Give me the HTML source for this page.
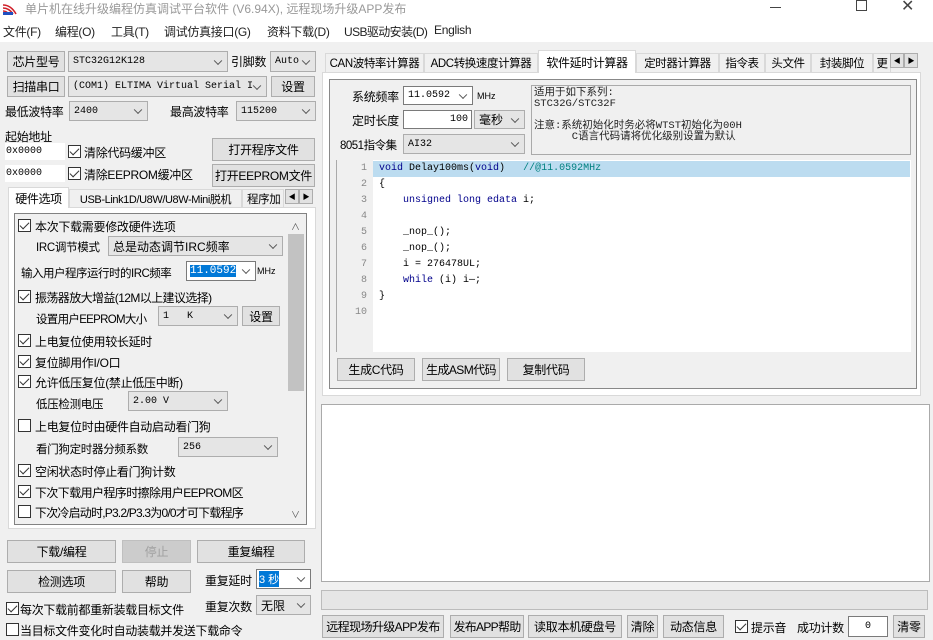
<!DOCTYPE html>
<html><head><meta charset="utf-8">
<style>
*{box-sizing:border-box;margin:0;padding:0}
body{width:933px;height:640px;background:#f0f0f0;position:relative;overflow:hidden;font-family:"Liberation Sans","Noto Sans CJK SC",sans-serif;font-size:12px;color:#000}
.a{position:absolute;white-space:nowrap}
.l{font-size:12px;letter-spacing:-0.3px}
.btn{position:absolute;background:#e1e1e1;border:1px solid #adadad;text-align:center;font-size:12px;display:flex;align-items:center;justify-content:center;white-space:nowrap;overflow:hidden;letter-spacing:-0.3px}
.cb{position:absolute;background:#fff;border:1px solid #7a7a7a;font-family:"Liberation Mono","Noto Sans CJK SC",monospace;font-size:10px;padding-left:3px;display:flex;align-items:center;white-space:nowrap;overflow:hidden}
.cmb{position:absolute;background:#e5e5e5;border:1px solid #adadad;font-family:"Liberation Mono","Noto Sans CJK SC",monospace;font-size:10px;padding-left:4px;display:flex;align-items:center;white-space:nowrap;overflow:hidden}
.cmb::after,.cb.dd::after{content:"";position:absolute;right:6px;top:50%;width:5px;height:5px;border-right:1px solid #555;border-bottom:1px solid #555;transform:translateY(-70%) rotate(45deg);background:inherit}
.chk{position:absolute;width:13px;height:13px;border:1px solid #333;background:#fff}
.chk.on::after{content:"";position:absolute;left:3px;top:0px;width:4px;height:8px;border-right:1.5px solid #333;border-bottom:1.5px solid #333;transform:rotate(45deg)}
.tab{position:absolute;border:1px solid #d9d9d9;border-bottom:none;background:#f0f0f0;text-align:center;font-size:11.5px;display:flex;align-items:center;justify-content:center;white-space:nowrap;overflow:hidden;letter-spacing:-0.4px}
.mono{font-family:"Liberation Mono","Noto Sans CJK SC",monospace}
.code{position:absolute;left:379px;font-family:"Liberation Mono",monospace;font-size:10px;height:16px;line-height:16px;white-space:pre}
.ln{position:absolute;left:340px;width:27px;text-align:right;font-family:"Liberation Mono",monospace;font-size:10px;color:#888;line-height:16px}
.kw{color:#00008b}
.m{position:absolute;top:23px;font-size:12px;color:#222;white-space:nowrap;letter-spacing:-0.3px}
</style></head><body>
<div class="a" style="left:0;top:0;width:933px;height:42px;background:#fff"></div>
<svg class="a" style="left:2px;top:2px" width="16" height="14"><path d="M1 3 Q9 3 14 12 M1 6 Q7 6 11 12 M1 9 Q4 9 7 12" stroke="#d0202a" stroke-width="1.6" fill="none"/><rect x="1" y="10" width="10" height="3" fill="#2050c0"/></svg>
<div class="a" style="left:25px;top:0px;font-size:12px;color:#999">单片机在线升级编程仿真调试平台软件 (V6.94X), 远程现场升级APP发布</div>
<div class="a" style="left:770px;top:7px;width:11px;height:1px;background:#444"></div>
<div class="a" style="left:856px;top:0px;width:11px;height:11px;border:1px solid #444"></div>
<div class="a" style="left:901px;top:-4px;font-size:16px;color:#444">✕</div>
<div class="m" style="left:3px">文件(F)</div>
<div class="m" style="left:55px">编程(O)</div>
<div class="m" style="left:111px">工具(T)</div>
<div class="m" style="left:164px">调试仿真接口(G)</div>
<div class="m" style="left:267px">资料下载(D)</div>
<div class="m" style="left:344px;letter-spacing:-0.6px">USB驱动安装(D)</div>
<div class="m" style="left:434px">English</div>

<div class="btn" style="left:7px;top:51px;width:58px;height:21px">芯片型号</div>
<div class="cmb" style="left:68px;top:51px;width:160px;height:21px">STC32G12K128</div>
<div class="a l" style="left:231px;top:53px">引脚数</div>
<div class="cmb" style="left:270px;top:51px;width:46px;height:21px">Auto</div>
<div class="btn" style="left:7px;top:76px;width:58px;height:21px">扫描串口</div>
<div class="cmb" style="left:68px;top:76px;width:199px;height:21px;padding-right:16px">(COM1) ELTIMA Virtual Serial I</div>
<div class="btn" style="left:271px;top:76px;width:44px;height:21px">设置</div>
<div class="a l" style="left:5px;top:103px">最低波特率</div>
<div class="cmb" style="left:69px;top:101px;width:79px;height:20px">2400</div>
<div class="a l" style="left:170px;top:103px">最高波特率</div>
<div class="cmb" style="left:236px;top:101px;width:80px;height:20px">115200</div>
<div class="a l" style="left:5px;top:128px">起始地址</div>
<div class="a mono" style="left:5px;top:143px;width:60px;height:17px;background:#fff;font-size:10px;padding:3px 1px">0x0000</div>
<div class="chk on" style="left:68px;top:145px"></div>
<div class="a l" style="left:84px;top:144px">清除代码缓冲区</div>
<div class="btn" style="left:212px;top:138px;width:103px;height:23px">打开程序文件</div>
<div class="a mono" style="left:5px;top:165px;width:60px;height:17px;background:#fff;font-size:10px;padding:3px 1px">0x0000</div>
<div class="chk on" style="left:68px;top:167px"></div>
<div class="a l" style="left:84px;top:166px">清除EEPROM缓冲区</div>
<div class="btn" style="left:212px;top:164px;width:103px;height:23px">打开EEPROM文件</div>

<div class="a" style="left:8px;top:207px;width:308px;height:322px;border:1px solid #d9d9d9;background:#fff"></div>
<div class="tab" style="left:8px;top:187px;width:61px;height:21px;background:#fff;font-size:12px">硬件选项</div>
<div class="tab" style="left:69px;top:189px;width:173px;height:18px;font-size:11px">USB-Link1D/U8W/U8W-Mini脱机</div>
<div class="tab" style="left:242px;top:189px;width:42px;height:18px;justify-content:flex-start;padding-left:4px">程序加</div>
<div class="btn" style="left:285px;top:189px;width:14px;height:15px;font-size:7px">◀</div>
<div class="btn" style="left:299px;top:189px;width:14px;height:15px;font-size:7px">▶</div>
<div class="a" style="left:14px;top:213px;width:293px;height:312px;border:1px solid #828282;background:#f0f0f0"></div>
<div class="a" style="left:288px;top:234px;width:16px;height:157px;background:#c2c2c2"></div>
<div class="a" style="left:291px;top:220px;font-size:9px;color:#555">∧</div>
<div class="a" style="left:291px;top:508px;font-size:9px;color:#555">∨</div>
<div class="chk on" style="left:18px;top:219px"></div><div class="a l" style="left:35px;top:218px">本次下载需要修改硬件选项</div>
<div class="a l" style="left:36px;top:239px;font-size:11.5px">IRC调节模式</div>
<div class="cmb" style="left:108px;top:236px;width:175px;height:20px;font-family:'Liberation Sans','Noto Sans CJK SC';font-size:12px">总是动态调节IRC频率</div>
<div class="a l" style="left:21px;top:265px;font-size:11.5px;letter-spacing:-0.5px">输入用户程序运行时的IRC频率</div>
<div class="cb dd" style="left:186px;top:261px;width:70px;height:20px"><span style="background:#0078d7;color:#fff;font-size:11px">11.0592</span></div>
<div class="a" style="left:257px;top:266px;font-size:9px">MHz</div>
<div class="chk on" style="left:18px;top:290px"></div><div class="a l" style="left:35px;top:289px;letter-spacing:-0.6px">振荡器放大增益(12M以上建议选择)</div>
<div class="a l" style="left:36px;top:311px;font-size:11.5px;letter-spacing:-0.7px">设置用户EEPROM大小</div>
<div class="cmb" style="left:158px;top:306px;width:80px;height:20px">1&nbsp;&nbsp;&nbsp;K</div>
<div class="btn" style="left:242px;top:306px;width:38px;height:20px">设置</div>
<div class="chk on" style="left:18px;top:334px"></div><div class="a l" style="left:35px;top:333px">上电复位使用较长延时</div>
<div class="chk on" style="left:18px;top:355px"></div><div class="a l" style="left:35px;top:354px">复位脚用作I/O口</div>
<div class="chk on" style="left:18px;top:375px"></div><div class="a l" style="left:35px;top:374px">允许低压复位(禁止低压中断)</div>
<div class="a l" style="left:36px;top:396px;font-size:11.5px">低压检测电压</div>
<div class="cmb" style="left:128px;top:391px;width:100px;height:20px">2.00 V</div>
<div class="chk" style="left:18px;top:419px"></div><div class="a l" style="left:35px;top:418px">上电复位时由硬件自动启动看门狗</div>
<div class="a l" style="left:36px;top:441px;font-size:11.5px">看门狗定时器分频系数</div>
<div class="cmb" style="left:178px;top:437px;width:100px;height:20px">256</div>
<div class="chk on" style="left:18px;top:464px"></div><div class="a l" style="left:35px;top:463px">空闲状态时停止看门狗计数</div>
<div class="chk on" style="left:18px;top:485px"></div><div class="a l" style="left:35px;top:484px;letter-spacing:-0.6px">下次下载用户程序时擦除用户EEPROM区</div>
<div class="chk" style="left:18px;top:505px"></div><div class="a l" style="left:35px;top:504px;letter-spacing:-0.8px">下次冷启动时,P3.2/P3.3为0/0才可下载程序</div>

<div class="btn" style="left:7px;top:540px;width:109px;height:23px">下载/编程</div>
<div class="btn" style="left:122px;top:540px;width:69px;height:23px;color:#a0a0a0;background:#ccc;border-color:#bfbfbf">停止</div>
<div class="btn" style="left:197px;top:540px;width:108px;height:23px">重复编程</div>
<div class="btn" style="left:7px;top:570px;width:109px;height:23px">检测选项</div>
<div class="btn" style="left:122px;top:570px;width:69px;height:23px">帮助</div>
<div class="a l" style="left:205px;top:572px">重复延时</div>
<div class="cb dd" style="left:256px;top:569px;width:55px;height:20px;padding-left:2px"><span style="background:#0078d7;color:#fff;font-size:11px;font-family:'Liberation Sans','Noto Sans CJK SC'">3 秒</span></div>
<div class="a l" style="left:205px;top:598px">重复次数</div>
<div class="cmb" style="left:256px;top:595px;width:55px;height:20px;font-size:12px;font-family:'Liberation Sans','Noto Sans CJK SC'">无限</div>
<div class="chk on" style="left:6px;top:602px"></div><div class="a l" style="left:20px;top:601px">每次下载前都重新装载目标文件</div>
<div class="chk" style="left:6px;top:623px"></div><div class="a l" style="left:20px;top:622px">当目标文件变化时自动装载并发送下载命令</div>

<div class="a" style="left:322px;top:72px;width:599px;height:324px;border:1px solid #d9d9d9;background:#fff"></div>
<div class="tab" style="left:325px;top:53px;width:99px;height:19px">CAN波特率计算器</div>
<div class="tab" style="left:424px;top:53px;width:114px;height:19px">ADC转换速度计算器</div>
<div class="tab" style="left:538px;top:50px;width:98px;height:23px;background:#fff;font-size:12px">软件延时计算器</div>
<div class="tab" style="left:636px;top:53px;width:83px;height:19px">定时器计算器</div>
<div class="tab" style="left:719px;top:53px;width:46px;height:19px">指令表</div>
<div class="tab" style="left:765px;top:53px;width:46px;height:19px">头文件</div>
<div class="tab" style="left:811px;top:53px;width:62px;height:19px">封装脚位</div>
<div class="tab" style="left:873px;top:53px;width:18px;height:19px">更</div>
<div class="btn" style="left:890px;top:53px;width:14px;height:15px;font-size:7px">◀</div>
<div class="btn" style="left:904px;top:53px;width:14px;height:15px;font-size:7px">▶</div>
<div class="a" style="left:329px;top:79px;width:588px;height:310px;border:1px solid #888;background:#f0f0f0"></div>
<div class="a l" style="left:352px;top:88px">系统频率</div>
<div class="cmb" style="left:403px;top:86px;width:70px;height:19px;background:#fff;border-color:#7a7a7a">11.0592</div>
<div class="a" style="left:477px;top:91px;font-size:9px">MHz</div>
<div class="a l" style="left:352px;top:112px">定时长度</div>
<div class="cb" style="left:403px;top:110px;width:69px;height:19px;justify-content:flex-end;padding-right:3px">100</div>
<div class="cmb" style="left:474px;top:110px;width:51px;height:19px;font-size:12px;font-family:'Liberation Sans','Noto Sans CJK SC'">毫秒</div>
<div class="a l" style="left:340px;top:137px;font-size:11.5px;letter-spacing:-0.5px">8051指令集</div>
<div class="cmb" style="left:403px;top:134px;width:122px;height:20px">AI32</div>
<div class="a mono" style="left:531px;top:85px;width:380px;height:70px;border:1px solid #aaa;background:#f0f0f0;font-size:10.5px;line-height:11px;padding:2px;white-space:pre;color:#222">适用于如下系列:
STC32G/STC32F

注意:系统初始化时务必将WTST初始化为00H
      C语言代码请将优化级别设置为默认</div>
<div class="a" style="left:336px;top:160px;width:575px;height:192px;background:#fff;border-left:1px solid #aaa"></div>
<div class="a" style="left:337px;top:160px;width:36px;height:192px;background:#f0f0f0"></div>
<div class="a" style="left:373px;top:161px;width:537px;height:16px;background:#bcdcf0"></div>
<div class="ln" style="top:161px">1</div><div class="ln" style="top:177px">2</div><div class="ln" style="top:193px">3</div><div class="ln" style="top:209px">4</div><div class="ln" style="top:225px">5</div><div class="ln" style="top:241px">6</div><div class="ln" style="top:257px">7</div><div class="ln" style="top:273px">8</div><div class="ln" style="top:289px">9</div><div class="ln" style="top:305px">10</div>
<div class="code" style="top:161px"><span class="kw">void</span> Delay100ms(<span class="kw">void</span>)   <span style="color:#008080">//@11.0592MHz</span></div>
<div class="code" style="top:177px">{</div>
<div class="code" style="top:193px">    <span class="kw">unsigned long edata</span> i;</div>
<div class="code" style="top:225px">    _nop_();</div>
<div class="code" style="top:241px">    _nop_();</div>
<div class="code" style="top:257px">    i = 276478UL;</div>
<div class="code" style="top:273px">    <span class="kw">while</span> (i) i—;</div>
<div class="code" style="top:289px">}</div>
<div class="btn" style="left:337px;top:358px;width:78px;height:23px">生成C代码</div>
<div class="btn" style="left:422px;top:358px;width:78px;height:23px;letter-spacing:-0.6px">生成ASM代码</div>
<div class="btn" style="left:507px;top:358px;width:78px;height:23px">复制代码</div>
<div class="a" style="left:321px;top:404px;width:609px;height:178px;background:#fff;border:1px solid #aaa"></div>
<div class="a" style="left:321px;top:590px;width:607px;height:20px;background:#e6e6e6;border:1px solid #bcbcbc"></div>
<div class="btn" style="left:322px;top:615px;width:122px;height:23px;letter-spacing:-0.6px">远程现场升级APP发布</div>
<div class="btn" style="left:450px;top:615px;width:74px;height:23px;letter-spacing:-0.7px">发布APP帮助</div>
<div class="btn" style="left:528px;top:615px;width:94px;height:23px">读取本机硬盘号</div>
<div class="btn" style="left:627px;top:615px;width:31px;height:23px">清除</div>
<div class="btn" style="left:663px;top:615px;width:61px;height:23px">动态信息</div>
<div class="chk on" style="left:735px;top:620px"></div><div class="a l" style="left:751px;top:619px">提示音</div>
<div class="a l" style="left:797px;top:619px">成功计数</div>
<div class="cb" style="left:848px;top:616px;width:40px;height:21px;justify-content:center;padding:0">0</div>
<div class="btn" style="left:893px;top:615px;width:32px;height:23px">清零</div>
</body></html>
